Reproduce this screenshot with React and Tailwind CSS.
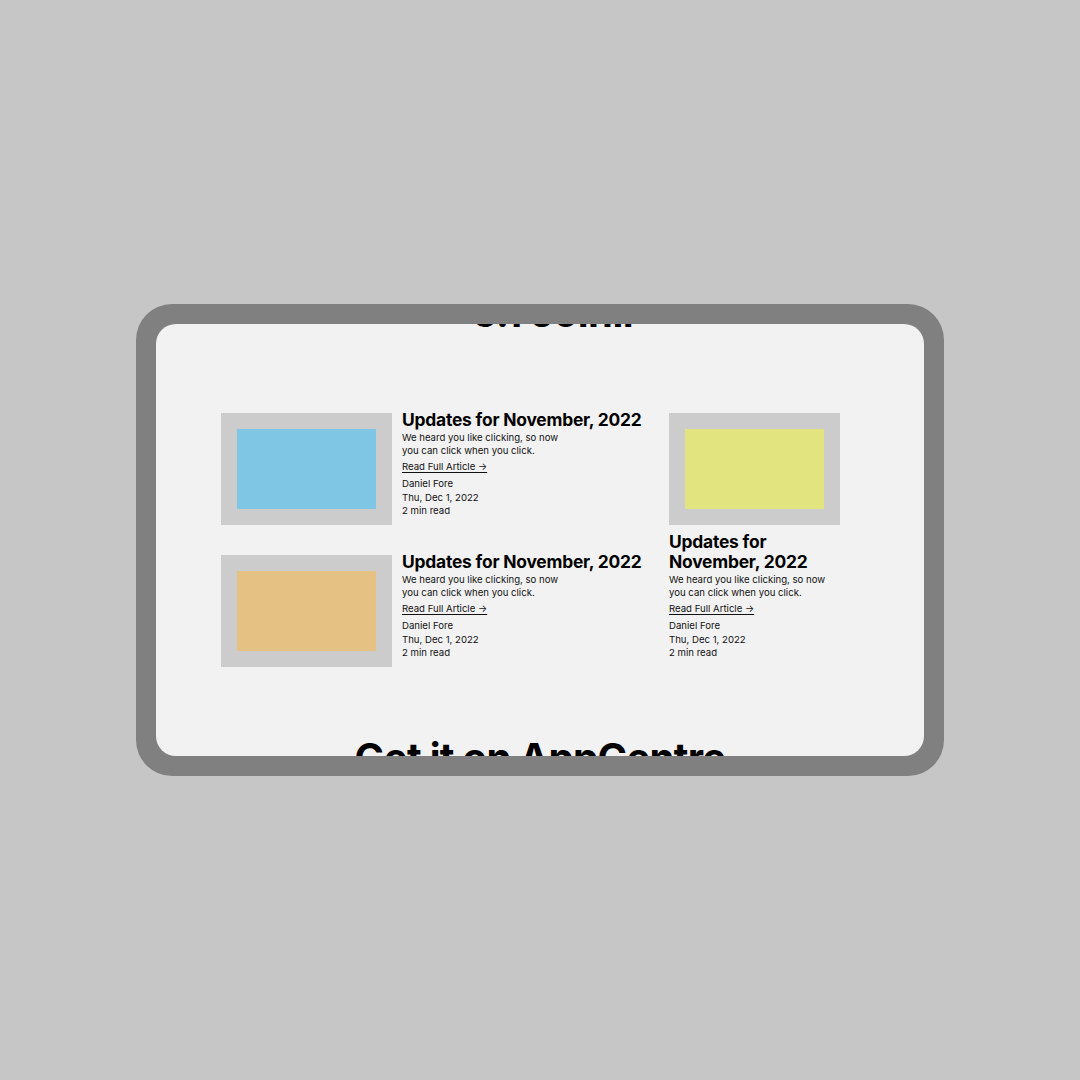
import React from "react";

function Thumb({ color }) {
  return (
    <div className="w-[171px] h-[112px] shrink-0 bg-[#cccccc] p-4">
      <div className={`w-full h-full ${color}`} />
    </div>
  );
}

function Meta() {
  return (
    <>
      <p className="text-[9.6px] leading-[13px] text-[#111] max-w-[160px]">
        We heard you like clicking, so now you can click when you click.
      </p>
      <a className="mt-[3px] text-[9.6px] leading-[13px] text-[#111] underline underline-offset-2 w-fit">
        Read Full Article →
      </a>
      <div className="mt-[4px] text-[9.6px] leading-[13.5px] text-[#111] flex flex-col">
        <span>Daniel Fore</span>
        <span>Thu, Dec 1, 2022</span>
        <span>2 min read</span>
      </div>
    </>
  );
}

function RowCard({ color }) {
  return (
    <div className="flex gap-[10px]">
      <Thumb color={color} />
      <div className="flex flex-col -mt-[3px]">
        <h3 className="text-[17.4px] leading-[20px] font-bold text-black tracking-[-0.2px] whitespace-nowrap">
          Updates for November, 2022
        </h3>
        <div className="mt-[1px] flex flex-col">
          <Meta />
        </div>
      </div>
    </div>
  );
}

export default function App() {
  return (
    <div
      className="w-[1080px] h-[1080px] bg-[#c6c6c6] flex items-center justify-center"
      style={{ fontFamily: "Inter, 'Noto Sans', sans-serif" }}
    >
      <div className="w-[808px] h-[472px] bg-[#808080] rounded-[36px] p-5">
        <div className="h-full rounded-[20px] bg-[#f2f2f2] overflow-hidden">
          <div className="-mt-[35px] flex flex-col items-center">
            <h2 className="text-[40px] leading-[48px] font-bold text-black tracking-[-0.5px] pl-[30px]">
              6.1 Jólnir
            </h2>
            <div className="mt-[76px] w-[638px] flex gap-[20px]">
              <div className="w-[428px] flex flex-col gap-[30px]">
                <RowCard color="bg-[#7fc6e5]" />
                <RowCard color="bg-[#e5c283]" />
              </div>
              <div className="w-[171px] flex flex-col">
                <Thumb color="bg-[#e2e47f]" />
                <h3 className="mt-[7px] text-[17.4px] leading-[20px] font-bold text-black tracking-[-0.2px]">
                  Updates for November, 2022
                </h3>
                <div className="mt-[1px] flex flex-col">
                  <Meta />
                </div>
              </div>
            </div>
            <h2 className="mt-[67px] text-[40px] leading-[48px] font-bold text-black tracking-[-0.7px]">
              Get it on AppCentre
            </h2>
          </div>
        </div>
      </div>
    </div>
  );
}
